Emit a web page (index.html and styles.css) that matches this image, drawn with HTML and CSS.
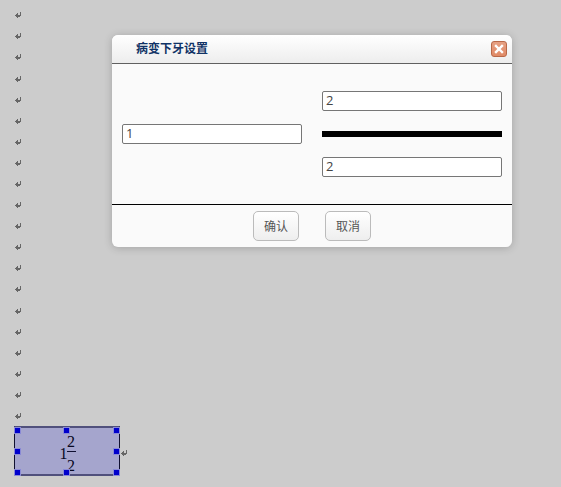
FILE: index.html
```html
<!DOCTYPE html>
<html lang="zh-CN">
<head>
<meta charset="utf-8">
<title>病变下牙设置</title>
<link rel="stylesheet" href="styles.css">
</head>
<body>
<svg width="0" height="0" class="defs"><symbol id="return" viewBox="0 0 6 6"><path fill="#666" d="M5 0h1v4H5zM0 3h1v1H0zM1 2h1v1H1zM2 1h1v1H2zM1 3h4v1H1zM1 4h2v1H1zM2 5h1v1H2zM2 2h1v1H2zM3 4h2v.5H3z"/></symbol></svg>
<main class="document">
  <div class="marks" id="marks"></div>
  <div class="formula-row">
    <div class="formula">
      <span class="whole">1</span>
      <span class="fraction"><span>2</span><span class="rule"></span><span>2</span></span>
      <i class="handle left top"></i><i class="handle center top"></i><i class="handle right top"></i>
      <i class="handle left middle"></i><i class="handle right middle"></i>
      <i class="handle left bottom"></i><i class="handle center bottom"></i><i class="handle right bottom"></i>
    </div>
    <svg class="mark"><use href="#return"/></svg>
  </div>
</main>
<section class="dialog">
  <header class="titlebar">
    <h1>病变下牙设置</h1>
    <button class="close" aria-label="关闭"><svg width="16" height="16" viewBox="0 0 16 16"><path d="M5 5l6 6M11 5l-6 6" stroke="#fff" stroke-width="2.4" stroke-linecap="square"/></svg></button>
  </header>
  <div class="fields">
    <input class="field" value="1">
    <div class="stack">
      <input class="field" value="2">
      <div class="bar"></div>
      <input class="field" value="2">
    </div>
  </div>
  <footer class="actions"><button class="button">确认</button><button class="button">取消</button></footer>
</section>
<script src="marks.js"></script>
</body>
</html>
```
FILE: styles.css
```css
* { box-sizing: border-box; }
body {
  margin: 0;
  height: 487px;
  overflow: hidden;
  background: #ccc;
  font: 12px "Liberation Sans", "Noto Sans CJK SC", sans-serif;
}
.defs { position: absolute; }
.document { padding: 4px 0 0 14px; }
.marks { height: 422px; padding: .7px 0 0 1px; }
.line { height: 21.1px; display: flex; align-items: center; }
.mark { width: 6px; height: 6px; shape-rendering: crispEdges; }
.formula-row { display: flex; align-items: center; height: 50px; }
.formula-row > .mark { margin: 4px 0 0 1px; }
.formula {
  position: relative;
  width: 106px;
  height: 50px;
  display: flex;
  align-items: center;
  justify-content: center;
  padding: 6px 0 0 1px;
  background: #a5a5cd;
  border: solid #50507c;
  border-width: 2px 1px;
  border-left-color: #101030;
  border-right-color: #101030;
  font: 16px/16px "Liberation Serif", serif;
  color: #080820;
}
.whole { width: 7px; }
.fraction { display: flex; flex-direction: column; align-items: center; width: 9px; }
.fraction span { height: 16px; line-height: 16px; }
.fraction .rule { width: 9px; height: 1px; margin: 1px 0 6px; background: #101030; }
.handle { position: absolute; width: 5px; height: 5px; background: #00c; outline: 1px solid #8989d6; }
.left { left: 0; }
.center { left: 49px; }
.right { right: 0; }
.top { top: 0; }
.middle { top: 21px; }
.bottom { bottom: -1px; }
.dialog {
  position: absolute;
  left: 112px;
  top: 35px;
  width: 400px;
  height: 212px;
  background: #fafafa;
  border-radius: 6px;
  box-shadow: 0 1px 8px rgba(0, 0, 0, .2);
}
.titlebar {
  height: 29px;
  display: flex;
  align-items: center;
  justify-content: space-between;
  padding: 0 5px 0 24px;
  border-bottom: 1px solid #606060;
  border-radius: 6px 6px 0 0;
  background: linear-gradient(#fff, #ededed);
}
h1 { margin: 0; font-size: 12px; line-height: 18px; color: #113366; }
.close {
  width: 16px;
  height: 16px;
  padding: 0;
  border: 1px solid #b96848;
  border-radius: 3px;
  background: linear-gradient(#e6a083, #e08a66);
}
.close svg { display: block; margin: -1px; }
.fields {
  height: 140px;
  display: flex;
  align-items: center;
  justify-content: space-between;
  padding: 0 10px;
}
.stack { display: flex; flex-direction: column; gap: 20px; }
.field {
  display: block;
  width: 180px;
  height: 20px;
  padding: 0 3px 2px;
  border: 1px solid #767676;
  border-radius: 2px;
  background: #fff;
  color: #444;
  font: 13px/16px "Open Sans", sans-serif;
}
.bar { height: 6px; background: #000; }
.actions {
  height: 43px;
  display: flex;
  align-items: center;
  justify-content: center;
  gap: 26px;
  border-top: 1px solid #000;
}
.button {
  width: 46px;
  height: 30px;
  padding: 0 0 2px;
  border: 1px solid #bbb;
  border-radius: 5px;
  background: linear-gradient(#fff, #eee);
  color: #555;
  font: 12px "Noto Sans CJK SC", sans-serif;
}
```
FILE: marks.js
```javascript
const marks = document.getElementById("marks");
for (let i = 0; i < 20; i += 1) {
  marks.insertAdjacentHTML("beforeend", '<div class="line"><svg class="mark"><use href="#return"/></svg></div>');
}
```
